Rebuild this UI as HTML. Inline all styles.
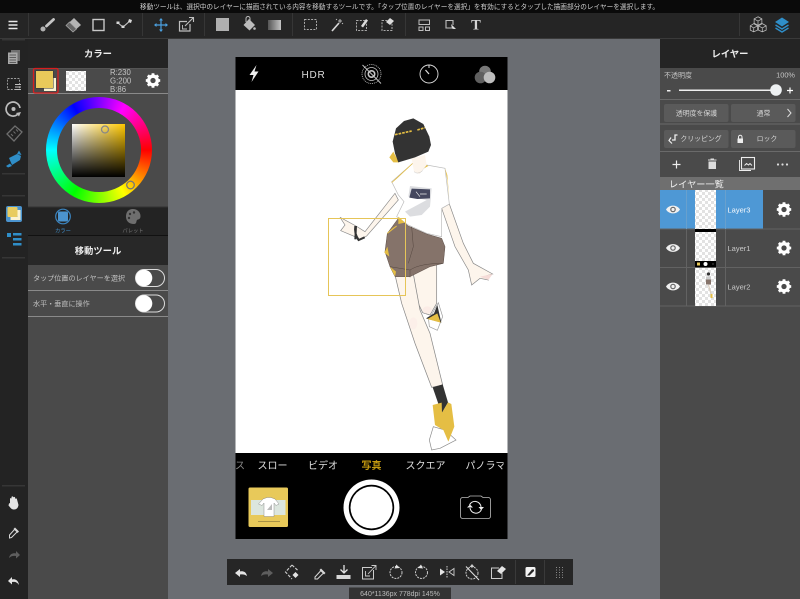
<!DOCTYPE html>
<html><head><meta charset="utf-8"><style>
html,body{margin:0;padding:0;width:800px;height:599px;overflow:hidden;background:#6a6d72}
#wrap{position:absolute;left:0;top:0;width:800px;height:599px;overflow:hidden;filter:blur(.3px)}
#wheel{position:absolute;left:45.5px;top:97px;width:106px;height:106px;border-radius:50%;background:conic-gradient(from 30deg,#f0f,#f00,#ff0,#0f0,#0ff,#00f,#f0f)}
#hole{position:absolute;left:56.5px;top:108px;width:84px;height:84px;border-radius:50%;background:#4a4a4a}
#sq{position:absolute;left:72px;top:124px;width:53px;height:53px;background:linear-gradient(to bottom,transparent,#000),linear-gradient(to right,#fff,#ffc800)}
#bg{position:absolute;left:0;top:0}
#ui{position:absolute;left:0;top:0}
text{font-family:"Liberation Sans","Noto Sans CJK JP",sans-serif}
</style></head><body><div id="wrap">
<svg id="bg" width="800" height="599" viewBox="0 0 800 599" xmlns="http://www.w3.org/2000/svg">
<rect width="800" height="599" fill="#6a6d72"/>
<rect x="0" y="38" width="28" height="561" fill="#232323"/>
<rect x="28" y="38" width="140" height="561" fill="#4a4a4a"/>
<rect x="28" y="38" width="140" height="30" fill="#242424"/>
<rect x="28" y="207" width="140" height="28" fill="#232323"/>
<rect x="28" y="236" width="140" height="29" fill="#282828"/>
<rect x="660" y="38" width="140" height="561" fill="#4a4a4a"/>
<rect x="660" y="38" width="140" height="30" fill="#242424"/>
</svg>
<div id="wheel"></div><div id="hole"></div><div id="sq"></div>
<svg id="ui" width="800" height="599" viewBox="0 0 800 599" xmlns="http://www.w3.org/2000/svg">
<defs>
<pattern id="chk" width="6" height="6" patternUnits="userSpaceOnUse"><rect width="6" height="6" fill="#fff"/><rect width="3" height="3" fill="#e2e2e2"/><rect x="3" y="3" width="3" height="3" fill="#e2e2e2"/></pattern>
<g id="gear"><circle r="4.300" fill="none" stroke="#fff" stroke-width="3.300"/><g stroke="#fff" stroke-width="2.800"><path d="M0-7.200V-5M0 7.200V5M-7.200 0H-5M7.200 0H5M-5.100-5.100L-3.500-3.500M5.100 5.100L3.500 3.500M-5.100 5.100L-3.500 3.500M5.100-5.100L3.500-3.500"/></g></g>
<g id="eye"><path d="M-7 0C-4-5.200 4-5.200 7 0C4 5.200-4 5.200-7 0Z" fill="#f0f0f0"/><circle r="2.800" fill="#666"/><circle r="1.600" fill="#f0f0f0"/></g>
<linearGradient id="gr"><stop offset="0" stop-color="#555"/><stop offset="1" stop-color="#c4c4c4"/></linearGradient>
</defs>

<!-- top message bar -->
<rect width="800" height="13" fill="#0a0a0a"/>
<text x="399.500" y="8.800" font-size="6.650" fill="#cfcfcf" text-anchor="middle">移動ツールは、選択中のレイヤーに描画されている内容を移動するツールです。「タップ位置のレイヤーを選択」を有効にするとタップした描画部分のレイヤーを選択します。</text>

<!-- toolbar -->
<rect y="13" width="800" height="25" fill="#252525"/>
<rect y="38" width="800" height="1" fill="#3a3a3a"/>
<g fill="#363636"><rect x="28" y="13" width="1" height="23"/><rect x="142" y="13" width="1" height="23"/><rect x="204" y="13" width="1" height="23"/><rect x="292" y="13" width="1" height="23"/><rect x="405" y="13" width="1" height="23"/><rect x="739" y="13" width="1" height="23"/></g>
<path d="M8.500 21.500H17.500M8.500 25H17.500M8.500 28.500H17.500" stroke="#e8e8e8" stroke-width="1.400"/>
<!-- brush -->
<path d="M53.500 19.500L46.500 26" stroke="#c4c4c4" stroke-width="2.800" stroke-linecap="round"/><circle cx="43" cy="29" r="2.500" fill="#b0b0b0"/>
<!-- eraser -->
<path d="M74 18L81 25L73 32L66 25.500Z" fill="#b4b4b4"/><path d="M69.500 22L76.500 29L73 32L66 25.500Z" fill="#666" stroke="#aaa" stroke-width=".7"/>
<!-- rect -->
<rect x="93" y="19.500" width="11" height="11" fill="none" stroke="#c8c8c8" stroke-width="1.400"/>
<!-- polyline tool -->
<path d="M118 23L123 27L131 20" fill="none" stroke="#c4c4c4" stroke-width="1.100"/><path d="M116.500 21.500h3v2.500h-3zM121.500 25.500h3v2.500h-3zM129 19l3 1-1 3-3-1z" fill="#d8d8d8"/>
<!-- move -->
<path d="M161 19V31M155 25H167" stroke="#4ba0e0" stroke-width="1.200"/><path d="M161 18l-2 2.500h4zM161 32l-2-2.500h4zM154 25l2.500-2v4zM168 25l-2.500-2v4z" fill="#4ba0e0"/>
<!-- transform -->
<path d="M187 21.500H179.500V31H190V24" fill="none" stroke="#bfbfbf" stroke-width="1.200"/><path d="M185 26L193 18M189 17.500H193.500V22" fill="none" stroke="#bfbfbf" stroke-width="1.100"/><path d="M182.500 25V29H187" fill="none" stroke="#bfbfbf" stroke-width=".9"/>
<!-- fill -->
<rect x="216" y="18" width="13" height="13" fill="#b0b0b0"/>
<!-- bucket -->
<path d="M249 19L255 25L249.500 30.500L243.500 25Z" fill="#bcbcbc"/><path d="M246 22V18.500a2 2 0 0 1 4 0V21" fill="none" stroke="#bcbcbc"/><circle cx="254.500" cy="28.500" r="1.300" fill="#bcbcbc"/>
<!-- gradient -->
<rect x="268" y="20" width="13" height="10" fill="url(#gr)"/>
<!-- selection tools -->
<rect x="304.500" y="19.500" width="12" height="10" fill="none" stroke="#aaa" stroke-dasharray="2 1.300"/>
<path d="M332 31L339 23" stroke="#d8d8d8" stroke-width="1.700"/><path d="M340 19v4M338 21h4M336 19l1 1M343 24l-1-1" stroke="#d8d8d8" stroke-width=".8"/>
<rect x="356.500" y="20.500" width="10" height="10" fill="none" stroke="#aaa" stroke-dasharray="2 1.300"/><path d="M361 26l5-7 2 1.500-5 7z" fill="#dcdcdc"/>
<rect x="382" y="20.500" width="10" height="10" fill="none" stroke="#aaa" stroke-dasharray="2 1.300"/><path d="M386 22l4-4 4 3-4 4z" fill="#dcdcdc"/>
<!-- layout -->
<path d="M419 20V24.500H429.500V20ZM419 27H423V30.500H419ZM425.500 27H429.500V30.500H425.500Z" fill="none" stroke="#bfbfbf" stroke-width="1"/>
<path d="M453 28H446V20.500H453V25" fill="none" stroke="#bfbfbf" stroke-width="1.100"/><path d="M451 24L456 29L453.500 29L452 28.500Z" fill="#ddd"/>
<text x="476" y="29.500" font-size="14.500" font-weight="bold" fill="#d4d4d4" text-anchor="middle" style="font-family:'Liberation Serif',serif">T</text>
<!-- cubes -->
<g fill="none" stroke="#bcbcbc" stroke-width=".9" transform="translate(758 24.500) scale(.86) translate(-758 -26)"><path d="M758 17l4.500 2.500v5l-4.500 2.500-4.500-2.500v-5zM753.500 19.500l4.500 2.500 4.500-2.500M758 22v5"/><path d="M753 25l4.500 2.500v5l-4.500 2-4-2v-5zM749 27.500l4 2.500 4.500-2.500M753 30v5"/><path d="M763 25l4.500 2.500v5l-4.500 2-4.500-2v-5zM758.500 27.500l4.500 2.500 4.500-2.500M763 30v5"/></g>
<!-- layers blue -->
<path d="M782 17.500L789 22L782 26.500L775 22Z" fill="#2f8ec8"/><path d="M775.500 25L782 29L788.500 25" fill="none" stroke="#2f8ec8" stroke-width="1.400"/><path d="M775.500 28L782 32L788.500 28" fill="none" stroke="#2f8ec8" stroke-width="1.400"/>

<!-- left rail -->
<g fill="#363636"><rect x="2" y="39" width="23" height="1.500"/><rect x="2" y="173" width="23" height="1.500"/><rect x="2" y="195" width="23" height="1.500"/><rect x="2" y="257" width="23" height="1.500"/><rect x="2" y="485" width="23" height="1.500"/></g>
<rect x="11" y="50" width="9" height="11" fill="#707070"/>
<rect x="8" y="52.500" width="9.500" height="11.500" fill="#a8a8a8"/><path d="M9.500 55h6.500M9.500 57.500h6.500M9.500 60h6.500M9.500 62.500h6.500" stroke="#444" stroke-width=".8"/>
<rect x="7.500" y="78.500" width="12" height="11" fill="none" stroke="#a0a0a0" stroke-dasharray="2 1.300" stroke-width=".9"/><path d="M15 84.500h6M15 87h6M15 89.500h6" stroke="#c0c0c0" stroke-width="1.100"/>
<path d="M17.500 114.500A7 7 0 1 1 20 108" fill="none" stroke="#bcbcbc" stroke-width="1.700"/><circle cx="13.500" cy="109" r="2" fill="#bcbcbc"/><path d="M16 113l5-1-2 4.500z" fill="#bcbcbc"/>
<path d="M7 134L15 126L22 132L14 141Z" fill="none" stroke="#6e6e6e" stroke-width="1.300"/><path d="M11 134l2 2M13.500 131.500l2 2M16 129.500l2 2" stroke="#6e6e6e"/>
<path d="M9 158L17 154L21 156L20 160L12 165Z" fill="#2f8ec8"/><path d="M17 154l2-3.500 2.500 4.500z" fill="#2f8ec8"/><path d="M6 166l4-2.500 2 2.500-4 1.500z" fill="#2f8ec8"/>
<rect x="6" y="206" width="16" height="16" rx="2" fill="#4b94cf"/><rect x="7.500" y="207" width="10" height="10" rx="1" fill="#e8cc60"/><path d="M17.500 210h3v10h-10v-3h7z" fill="#fbf3d2"/>
<g fill="#2f8ec8"><rect x="7" y="233" width="4" height="4"/><rect x="13" y="233" width="8.500" height="2.500"/><rect x="13" y="238" width="8.500" height="2.500"/><rect x="13" y="243" width="8.500" height="2.500"/></g>
<!-- hand -->
<path d="M10 503V498.500a1 1 0 0 1 1.500 0V497a1 1 0 0 1 1.800 0V497.500a1 1 0 0 1 1.800 0V499a1 1 0 0 1 1.800 0L18.500 505C18 508 16.500 509.500 14 509.500C11 509.500 10.500 507.500 8.500 505.500L9 503.500Z" fill="#e4e4e4"/>
<path d="M9.500 535L15 529L17.500 531.500L11.500 537.500L9.500 538Z" fill="none" stroke="#d8d8d8" stroke-width="1"/><path d="M15 527.500L19 531.500L17.500 533L13.500 529Z" fill="#d8d8d8"/>
<path d="M9 558C10 553 14 553 16 553.500V551L20 555L16 558.500V556C13 555.500 11 556 9 558Z" fill="#5e5e5e"/>
<path d="M19 585C18 579 14 579 12 579.500V577L8 581L12 584.500V582C15 581.500 17 582 19 585Z" fill="#e4e4e4"/>

<!-- color panel -->
<text x="98" y="57" font-size="9.300" fill="#eee" text-anchor="middle" font-weight="bold">カラー</text>
<rect x="28" y="68" width="140" height="1" fill="#555"/>
<rect x="28" y="93" width="140" height="1" fill="#8a8a8a"/>
<rect x="33.500" y="68.500" width="24.500" height="24.500" rx="1.500" fill="none" stroke="#d81e1e" stroke-width="1.300"/>
<rect x="44" y="78" width="12" height="13" fill="#fbf3d2"/>
<rect x="35.500" y="70.500" width="18" height="18" fill="#333"/>
<rect x="36" y="71" width="17" height="17" fill="#e8c95a"/>
<rect x="66" y="71" width="20" height="20" fill="url(#chk)"/>
<g font-size="7.800" fill="#c4c4c4"><text x="110" y="75">R:230</text><text x="110" y="83.500">G:200</text><text x="110" y="91.800">B:86</text></g>
<use href="#gear" x="153" y="80.500"/>
<!-- handles -->
<circle cx="105" cy="129.500" r="3.500" fill="none" stroke="#888" stroke-width="1.300"/>
<circle cx="130.500" cy="185" r="3.800" fill="none" stroke="#777" stroke-width="1.300"/>
<!-- tabs -->
<rect x="28" y="235" width="140" height="1" fill="#111"/>
<rect x="28" y="206.500" width="140" height="1" fill="#333"/>
<circle cx="63" cy="216.500" r="7.300" fill="none" stroke="#3b86c2" stroke-width="1.200"/><rect x="58" y="211.500" width="10" height="10" rx="1.500" fill="#4b94cf"/>
<text x="63" y="232.500" font-size="5.300" fill="#3f8dc9" text-anchor="middle">カラー</text>
<path d="M133 209C127 209 126 214 126 216.500C126 221 129 224 134 224C137 224 136 221 137 220C138.500 219 140.500 219.500 140.500 216C140.500 212 137 209 133 209Z" fill="#6e6e6e"/><circle cx="130" cy="214" r="1.200" fill="#333"/><circle cx="134" cy="212.500" r="1.200" fill="#333"/><circle cx="129" cy="218" r="1.200" fill="#333"/>
<text x="133" y="232.500" font-size="5.300" fill="#777" text-anchor="middle">パレット</text>
<!-- tool settings -->
<text x="98" y="254" font-size="9.300" fill="#eee" text-anchor="middle" font-weight="bold">移動ツール</text>
<rect x="28" y="290" width="140" height="1" fill="#8a8a8a"/>
<rect x="28" y="316" width="140" height="1" fill="#8a8a8a"/>
<text x="33" y="280.500" font-size="7.100" fill="#c0c0c0">タップ位置のレイヤーを選択</text>
<text x="33" y="306" font-size="7.100" fill="#c0c0c0">水平・垂直に操作</text>
<rect x="135.500" y="269.500" width="29" height="17" rx="8.500" fill="none" stroke="#ddd"/><circle cx="144" cy="278" r="8.300" fill="#fff"/>
<rect x="135.500" y="295" width="29" height="17" rx="8.500" fill="none" stroke="#ddd"/><circle cx="144" cy="303.500" r="8.300" fill="#fff"/>

<!-- phone -->
<rect x="235.500" y="57" width="272" height="482" fill="#000"/>
<rect x="235.500" y="90" width="272" height="363" fill="#fff"/>
<path d="M256.500 65L249.500 75H253.500L251.500 82L258.500 71.500H254.500Z" fill="#eee"/>
<text x="313.500" y="78" font-size="10" fill="#ddd" text-anchor="middle" letter-spacing=".8">HDR</text>
<g fill="none" stroke="#c8c8c8"><circle cx="371.500" cy="74" r="9.500" stroke-dasharray="1 .9" stroke-width=".8"/><circle cx="371.500" cy="74" r="6.500" stroke-width=".8"/><circle cx="371.500" cy="74" r="3.200" stroke-width="1.600"/><path d="M362.500 65L381 83.500" stroke-width=".9"/></g>
<circle cx="429" cy="74" r="9" fill="none" stroke="#ddd" stroke-width=".9"/><path d="M429 74L425.500 70" stroke="#ddd" stroke-width="1.200"/><path d="M429 65V68" stroke="#ddd"/>
<circle cx="485" cy="71.500" r="5.800" fill="#777"/><circle cx="480.500" cy="77.500" r="5.800" fill="#5f5f5f"/><circle cx="489.500" cy="77.500" r="5.800" fill="#bdbdbd"/>
<!-- mode labels -->
<g font-size="10" text-anchor="middle" fill="#e0e0e0"><text x="272.500" y="469">スロー</text><text x="323" y="469">ビデオ</text><text x="371.500" y="469" fill="#c49a10" font-weight="bold">写真</text><text x="425.500" y="469">スクエア</text><text x="485.500" y="469">パノラマ</text></g>
<text x="240" y="469" font-size="10" fill="#888" text-anchor="middle">ス</text>
<rect x="503.500" y="458" width="4" height="14" fill="#000"/>
<!-- thumb -->
<rect x="248.500" y="487.500" width="39.500" height="39.500" rx="1.500" fill="#e8c95a"/>
<rect x="251" y="500" width="34.500" height="15" fill="#dce6de"/>
<path d="M263 499L267 497.500H271L275 499L279 504L276 505.500L274 503V516.500H264V503L262 505.500L258.500 504Z" fill="#fff" stroke="#777" stroke-width=".4"/>
<path d="M267 510l5-6v6z" fill="#bbb"/>
<rect x="258" y="521" width="22" height="1" fill="#a89245"/>
<!-- shutter -->
<circle cx="371.500" cy="507.500" r="28" fill="#fff"/><circle cx="371.500" cy="507.500" r="22.700" fill="#000"/><circle cx="371.500" cy="507.500" r="21" fill="#fff"/>
<!-- flip camera -->
<path d="M464.500 497.500H468L470 496H481L483 497.500H488Q490.500 497.500 490.500 500V516Q490.500 518.500 488 518.500H463Q460.500 518.500 460.500 516V500Q460.500 497.500 463 497.500Z" fill="none" stroke="#bbb" stroke-width=".8"/>
<path d="M469.500 505A6 6 0 0 1 481 507M481.500 509.500A6 6 0 0 1 470 508" fill="none" stroke="#eee" stroke-width="1"/><path d="M478.500 507H484L481.200 510zM467 507.500H473L470 504.500z" fill="#eee"/>

<!-- illustration lower (drawn first, so shorts sit on top) -->
<g transform="translate(330 270) scale(.33333)">
<path d="M245 -25L260 90L278 128L300 135L320 100L320 -25Z" fill="#fdf5ec" stroke="#888" stroke-width="2.200"/>
<ellipse cx="292" cy="120" rx="14" ry="11" fill="#fbece6"/>
<path d="M325 98L338 140L322 181L298 170L296 150Z" fill="#fff" stroke="#999" stroke-width="2"/>
<path d="M322 105L334 158L288 145L312 130Z" fill="#333"/><path d="M322 130L332 158L292 147Z" fill="#e5be44"/>
<path d="M188 -15L215 100L255 220L305 352L338 345L300 190L270 120L245 -15Z" fill="#fdf5ec" stroke="#888" stroke-width="2.200"/>
<ellipse cx="250" cy="160" rx="12" ry="18" fill="#fcefe9"/>
<path d="M308 352L338 343L354 397L335 430Z" fill="#333"/>
<path d="M310 470L345 480L378 510L330 535L305 540L298 510Z" fill="#fff" stroke="#888" stroke-width="2"/>
<path d="M308 405L335 398L336 428L354 397L364 402L373 470L355 515L340 480L315 465Z" fill="#e5be44"/>
</g>
<!-- illustration upper -->
<g transform="translate(330 100) scale(.33333)">
<path d="M195 280L105 395L78 378L30 352L45 375L32 392L75 410L85 422L110 408L205 300Z" fill="#fdf5ec" stroke="#888" stroke-width="2"/>
<path d="M78 378L76 418M76 378Q72 400 86 420L104 412" fill="none" stroke="#333" stroke-width="6"/>
<path d="M335 325L358 312L400 430L430 490L488 522L468 528L475 540L450 535L425 555L415 510L375 440Z" fill="#fdf5ec" stroke="#888" stroke-width="2"/>
<path d="M450 530L488 522L475 540Z" fill="#f6dcd8"/>
<path d="M248 190L185 245L205 285L222 305L200 350L235 375L290 400L335 410L335 325L358 312L345 205L290 195L268 220Z" fill="#fff" stroke="#bbb" stroke-width="2"/>
<path d="M240 258L305 265L300 320L275 345L240 350L225 335L290 300L235 290Z" fill="#dcdde0"/>
<path d="M245 266L300 268L300 295L262 297L238 293Z" fill="#45485f"/>
<path d="M258 275L270 290M270 282H290" stroke="#eee" stroke-width="2"/>
<path d="M345 205L352 225L358 300L352 240Z" fill="#e5be44"/><path d="M248 190L185 248L200 235Z" fill="#e5be44" stroke="#e5be44" stroke-width="2"/>
<path d="M290 195L282 205L295 198Z" fill="#e5be44"/>
<path d="M205 355L235 378L290 402L335 415L345 440L340 490L300 500L240 530L195 530L180 500L165 455L172 400Z" fill="#85736a" stroke="#5a4c45" stroke-width="1.500"/>
<path d="M205 350L225 368L205 372Z" fill="#e5be44"/><path d="M172 400L200 378L190 385Z" fill="#e5be44" stroke="#e5be44" stroke-width="3"/><path d="M172 440L163 458L178 470Z" fill="#e5be44"/><path d="M180 500L198 515L195 530Z" fill="#e5be44"/>
<path d="M180 500L240 510M240 510L240 532M240 510Q270 490 340 490M245 380L250 440L235 490" fill="none" stroke="#54463f" stroke-width="1.500"/>
<path d="M245 175L252 215L268 222L290 195L285 165Z" fill="#fdf5ec"/>
<path d="M252 215Q262 225 278 212" fill="none" stroke="#aaa"/>
<path d="M190 155L178 172L190 187L208 187L195 165Z" fill="#e5be44"/>
<path d="M188 125L198 85L222 63L250 55L280 72L298 110L303 135L295 155L255 172L205 187L195 160Z" fill="#333"/>
<path d="M195 104L245 93M262 90L285 83" stroke="#e5be44" stroke-width="5" stroke-dasharray="8 3"/>
</g>
<!-- yellow selection -->
<path d="M328.500 218.500H405.500V295.500H328.500Z" fill="none" stroke="#e6c558" stroke-width="1"/>

<!-- right panel -->
<text x="730" y="57" font-size="9.300" fill="#eee" text-anchor="middle" font-weight="bold">レイヤー</text>
<text x="664" y="77.500" font-size="7" fill="#c4c4c4">不透明度</text>
<text x="795" y="77.500" font-size="7.400" fill="#c4c4c4" text-anchor="end">100%</text>
<rect x="667" y="90" width="3.500" height="1.500" fill="#eee"/>
<rect x="679" y="89.500" width="97" height="1.500" fill="#eee"/>
<circle cx="776" cy="90" r="5.800" fill="#eef1f2"/>
<path d="M787 90.500h6M790 87.500v6" stroke="#fff" stroke-width="1.200"/>
<rect x="660" y="99" width="140" height="1" fill="#6a6a6a"/>
<rect x="664" y="104" width="64.500" height="18" rx="2" fill="#5a5a5a"/><rect x="731" y="104" width="64.500" height="18" rx="2" fill="#5a5a5a"/>
<text x="696.500" y="115.500" font-size="6.900" fill="#d4d4d4" text-anchor="middle">透明度を保護</text>
<text x="763.500" y="115.500" font-size="6.900" fill="#d4d4d4" text-anchor="middle">通常</text>
<path d="M787.500 109L791 113L787.500 117" fill="none" stroke="#ddd"/>
<rect x="660" y="123.500" width="140" height="1" fill="#6a6a6a"/>
<rect x="664" y="130" width="64.500" height="18" rx="2" fill="#5a5a5a"/><rect x="731" y="130" width="64.500" height="18" rx="2" fill="#5a5a5a"/>
<path d="M672 140H675V135H677.500" fill="none" stroke="#eee" stroke-width="1.300"/><path d="M671 137.500L669 140.500L672 143.500" fill="none" stroke="#eee" stroke-width="1.200"/>
<text x="701" y="141" font-size="6.900" fill="#d4d4d4" text-anchor="middle">クリッピング</text>
<rect x="737.500" y="138.500" width="5.500" height="4.500" fill="#eee"/><path d="M738.500 138.500V137a1.700 1.700 0 0 1 3.500 0V138.500" fill="none" stroke="#eee"/>
<text x="767" y="141" font-size="6.900" fill="#d4d4d4" text-anchor="middle">ロック</text>
<rect x="660" y="151" width="140" height="1" fill="#6a6a6a"/>
<path d="M672.500 164.500h8M676.500 160.500v8" stroke="#eee" stroke-width="1.200"/>
<path d="M708 160h8.500M711 160v-1h2.500v1" stroke="#ddd"/><path d="M708.500 161.500h7.500v7.500h-7.500z" fill="#ddd"/>
<path d="M739.500 160V170.500H751" fill="none" stroke="#eee" stroke-width=".9"/><rect x="741.500" y="157.500" width="13" height="11.500" fill="none" stroke="#eee" stroke-width="1.100"/><path d="M744.500 165.500L746.500 163.500L748.500 165L750 163.500L752 165.500" fill="none" stroke="#eee" stroke-width=".9"/>
<g fill="#ddd"><circle cx="778" cy="164.500" r="1.100"/><circle cx="782.500" cy="164.500" r="1.100"/><circle cx="787" cy="164.500" r="1.100"/></g>
<!-- list -->
<rect x="660" y="177" width="140" height="13" fill="#6f6f6f"/>
<text x="669" y="187.500" font-size="9.200" fill="#f0f0f0">レイヤー一覧</text>
<rect x="660" y="190" width="103" height="39" fill="#4e98d5"/>
<g fill="#626262"><rect x="660" y="228.500" width="140" height="1"/><rect x="660" y="267" width="140" height="1"/><rect x="660" y="305.500" width="140" height="1"/><rect x="686" y="229" width="1" height="77"/><rect x="725" y="229" width="1" height="77"/></g>
<rect x="686" y="190" width="1" height="39" fill="#68a0cd"/><rect x="725" y="190" width="1" height="39" fill="#68a0cd"/>
<rect x="695" y="190" width="21" height="39" fill="url(#chk)"/>
<rect x="695" y="229" width="21" height="38" fill="url(#chk)"/>
<rect x="695" y="229" width="21" height="3" fill="#000"/><rect x="695" y="261" width="21" height="6" fill="#000"/><rect x="697" y="262.500" width="3" height="3" fill="#e8c95a"/><circle cx="705.500" cy="264" r="2" fill="#fff"/><circle cx="713" cy="264" r="1" fill="#333"/>
<rect x="695" y="268" width="21" height="38" fill="url(#chk)"/>
<circle cx="708.500" cy="274" r="1.600" fill="#333"/><rect x="706" y="276.500" width="5" height="3" fill="#ccc"/><rect x="706" y="279.500" width="5" height="5" fill="#85736a"/><path d="M708.500 285L711 294" stroke="#d9cdbf" stroke-width="1.300"/><rect x="710.500" y="294" width="2" height="4" fill="#e5be44"/>
<use href="#eye" x="673" y="209.500"/><use href="#eye" x="673" y="248"/><use href="#eye" x="673" y="286.500"/>
<text x="727.500" y="212.500" font-size="7.500" fill="#f4f8fc">Layer3</text>
<text x="727.500" y="251" font-size="7.500" fill="#c8c8c8">Layer1</text>
<text x="727.500" y="289.500" font-size="7.500" fill="#c8c8c8">Layer2</text>
<use href="#gear" x="784" y="209.500"/><use href="#gear" x="784" y="248"/><use href="#gear" x="784" y="286.500"/>

<!-- bottom toolbar -->
<rect x="227" y="559" width="346" height="26" fill="#262626"/>
<rect x="515" y="560" width="1" height="24" fill="#3a3a3a"/><rect x="544" y="560" width="1" height="24" fill="#3a3a3a"/>
<path d="M247 576C246 571 242 571 240 571.500V569L235 573L240 577V574.500C243 574 245 574.500 247 576Z" fill="#e4e4e4"/>
<path d="M261 576C262 571 266 571 268 571.500V569L273 573L268 577V574.500C265 574 263 574.500 261 576Z" fill="#5e5e5e"/>
<path d="M292 565L285.500 572L292 579M292 565L298.500 571" fill="none" stroke="#d0d0d0" stroke-width="1.100" stroke-dasharray="3 1.500"/><path d="M295.500 572l3 3-3 3-3-3z" fill="#e4e4e4"/>
<path d="M315 577L321 570.500L323.500 573L317.500 579L315 579Z" fill="none" stroke="#d8d8d8" stroke-width="1"/><path d="M321 568.500L325.500 573L324 574.500L319.500 570Z" fill="#d8d8d8"/>
<path d="M344 565V572.500M340.500 569.500L344 573L347.500 569.500" fill="none" stroke="#e4e4e4" stroke-width="1.300"/><rect x="336.500" y="575" width="14" height="4" fill="#d8d8d8"/>
<path d="M372 567.500H362.500V579H373.500V570" fill="none" stroke="#ccc" stroke-width="1"/><path d="M368 574L375.500 566M371.500 565.500H376V570" fill="none" stroke="#ccc" stroke-width=".9"/><path d="M365.500 571V576H370" fill="none" stroke="#ccc" stroke-width=".9"/>
<circle cx="396" cy="572.500" r="6" fill="none" stroke="#ccc" stroke-dasharray="2 1" stroke-width="1"/><path d="M396.500 564.500L399.500 568L394.500 568.500Z" fill="#e4e4e4"/>
<circle cx="421.500" cy="572.500" r="6" fill="none" stroke="#ccc" stroke-dasharray="2 1" stroke-width="1"/><path d="M421 564.500L418 568L423 568.500Z" fill="#e4e4e4"/>
<path d="M440 568.500L445 572L440 575.500Z" fill="#e4e4e4"/><path d="M454 568.500L449 572L454 575.500Z" fill="none" stroke="#ccc" stroke-width=".9"/><path d="M447 566V578" stroke="#ccc" stroke-dasharray="1.500 1"/>
<circle cx="472" cy="573" r="6" fill="none" stroke="#ccc" stroke-dasharray="2 1" stroke-width="1"/><path d="M466 566.500L479 580" stroke="#e4e4e4" stroke-width="1"/><path d="M472 564l-2.500 3h5z" fill="#ccc"/>
<path d="M499 568H491.500V578.500H502V573" fill="none" stroke="#ccc" stroke-width="1"/><path d="M497 571L502 566L506 569L501 574Z" fill="#e4e4e4"/>
<rect x="525.500" y="567" width="10" height="10" rx="1.500" fill="#f4f4f4"/><path d="M527 575.500L532 569.500H534V571L529.500 575.500Z" fill="#262626"/>
<g fill="#8a8a8a"><path d="M556 567h1v1h-1zM559 567h1v1h-1zM562 567h1v1h-1zM556 569.500h1v1h-1zM559 569.500h1v1h-1zM562 569.500h1v1h-1zM556 572h1v1h-1zM559 572h1v1h-1zM562 572h1v1h-1zM556 574.500h1v1h-1zM559 574.500h1v1h-1zM562 574.500h1v1h-1zM556 577h1v1h-1zM559 577h1v1h-1zM562 577h1v1h-1z"/></g>
<rect x="349" y="587.500" width="102" height="11.500" fill="#333"/>
<text x="400" y="596" font-size="7" fill="#bcbcbc" text-anchor="middle">640*1136px 778dpi 145%</text>
</svg>
</div></body></html>
